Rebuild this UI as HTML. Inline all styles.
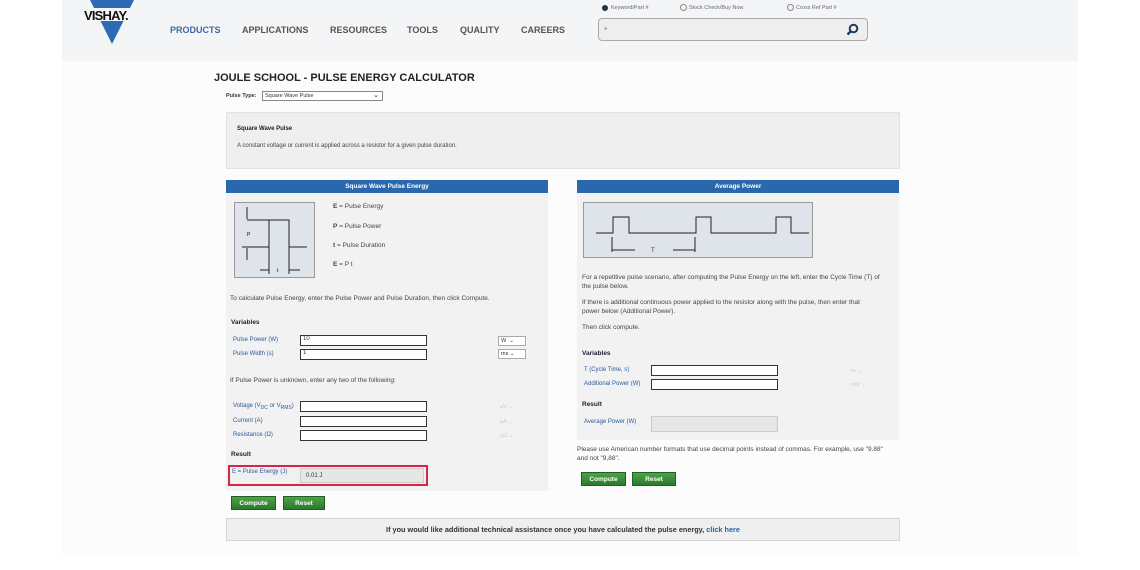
<!DOCTYPE html>
<html><head><meta charset="utf-8"><style>
*{margin:0;padding:0;box-sizing:border-box}
body{width:1140px;height:570px;background:#fff;position:relative;overflow:hidden;font-family:"Liberation Sans",Arial,sans-serif;color:#333}
.a{position:absolute;white-space:nowrap}
.nav{font-size:9px;font-weight:bold;color:#555;top:25px}
.s{font-size:6.5px;color:#444}
.lb{font-size:6px;color:#2a5a9a}
.in{position:absolute;background:#fff;border:1px solid #333;height:11px}
.btn{position:absolute;background:linear-gradient(#4ea24a,#2c7a2c);color:#fff;font-size:6.5px;font-weight:bold;text-align:center;line-height:13px;height:14px;border:1px solid #1f5f1f}
.hd{position:absolute;background:#2a68ae;color:#fff;font-size:6.5px;font-weight:bold;text-align:center;line-height:13px;height:13px}
.sel{position:absolute;font-size:5.5px;color:#ccc}
</style></head><body>
<div class="a" style="left:62px;top:0;width:1016px;height:61px;background:#f4f5f7"></div>
<div class="a" style="left:62px;top:61px;width:1016px;height:496px;background:#fcfcfc"></div>
<svg class="a" style="left:82px;top:0" width="60" height="46"><polygon points="8,0 52,0 30,44" fill="#2d6bb3"/><rect x="0" y="8" width="60" height="13" fill="#f4f5f7"/></svg>
<div class="a" style="left:84px;top:8px;font-size:13px;font-weight:900;color:#111;letter-spacing:-0.8px">VISHAY.</div>
<div class="a nav" style="left:170px;color:#3c6aa0">PRODUCTS</div>
<div class="a nav" style="left:242px">APPLICATIONS</div>
<div class="a nav" style="left:330px">RESOURCES</div>
<div class="a nav" style="left:407px">TOOLS</div>
<div class="a nav" style="left:460px">QUALITY</div>
<div class="a nav" style="left:521px">CAREERS</div>
<div class="a" style="left:602px;top:5px;width:6px;height:6px;border-radius:50%;background:#234"></div>
<div class="a" style="left:611px;top:5px;font-size:5.5px;color:#667">Keyword/Part #</div>
<div class="a" style="left:680px;top:4px;width:7px;height:7px;border-radius:50%;border:1px solid #888"></div>
<div class="a" style="left:689px;top:5px;font-size:5.5px;color:#667">Stock Check/Buy Now</div>
<div class="a" style="left:787px;top:4px;width:7px;height:7px;border-radius:50%;border:1px solid #888"></div>
<div class="a" style="left:796px;top:5px;font-size:5.5px;color:#667">Cross Ref Part #</div>
<div class="a" style="left:598px;top:18px;width:270px;height:23px;border:1px solid #aaa;border-radius:4px;background:#eceef0"></div>
<div class="a" style="left:604px;top:26px;font-size:5.5px">»</div>
<svg class="a" style="left:846px;top:23px" width="13" height="13"><circle cx="7.5" cy="5.5" r="3.8" stroke="#1f3a5a" stroke-width="2" fill="none"/><line x1="4.8" y1="8.2" x2="1.5" y2="11.5" stroke="#1f3a5a" stroke-width="2.4"/></svg>
<div class="a" style="left:214px;top:72px;font-size:11px;font-weight:bold;color:#222">JOULE SCHOOL - PULSE ENERGY CALCULATOR</div>
<div class="a" style="left:226px;top:93px;font-size:5.5px;font-weight:bold">Pulse Type:</div>
<div class="a" style="left:262px;top:91px;width:121px;height:10px;border:1px solid #888;background:#fff;font-size:5.5px;padding:1px 2px">Square Wave Pulse<span style="position:absolute;right:3px;top:-1px;font-size:7px">⌄</span></div>
<div class="a" style="left:226px;top:112px;width:674px;height:57px;background:#efefef;border:1px solid #e2e2e2"></div>
<div class="a" style="left:237px;top:126px;font-size:6px;font-weight:bold;color:#222">Square Wave Pulse</div>
<div class="a s" style="left:237px;top:143px;font-size:6px">A constant voltage or current is applied across a resistor for a given pulse duration.</div>
<!-- left panel -->
<div class="a" style="left:226px;top:180px;width:322px;height:311px;background:#f2f2f2"></div>
<div class="hd" style="left:226px;top:180px;width:322px">Square Wave Pulse Energy</div>
<svg class="a" style="left:234px;top:202px" width="81" height="76"><rect x="0.5" y="0.5" width="80" height="75" fill="#dfe3ea" stroke="#999"/><g stroke="#222" stroke-width="1" fill="none"><polyline points="8,45 35,45 35,18 55,18 55,45 73,45"/><line x1="13" y1="5" x2="13" y2="17"/><line x1="13" y1="18" x2="35" y2="18"/><line x1="13" y1="46" x2="13" y2="58"/><line x1="35" y1="45" x2="35" y2="72"/><line x1="55" y1="45" x2="55" y2="72"/><line x1="26" y1="68" x2="35" y2="68"/><line x1="55" y1="68" x2="66" y2="68"/></g><text x="13" y="34" font-size="5" font-family="Liberation Sans">P</text><text x="43" y="70" font-size="5" font-family="Liberation Sans">t</text></svg>
<div class="a s" style="left:333px;top:203px"><b>E</b> = Pulse Energy</div>
<div class="a s" style="left:333px;top:223px"><b>P</b> = Pulse Power</div>
<div class="a s" style="left:333px;top:242px"><b>t</b> = Pulse Duration</div>
<div class="a s" style="left:333px;top:261px"><b>E</b> = P t</div>
<div class="a s" style="left:230px;top:295px">To calculate Pulse Energy, enter the Pulse Power and Pulse Duration, then click Compute.</div>
<div class="a" style="left:231px;top:319px;font-size:6.5px;font-weight:bold;color:#223">Variables</div>
<div class="a lb" style="left:233px;top:337px">Pulse Power (W)</div>
<div class="in" style="left:300px;top:335px;width:127px;font-size:6px;padding-left:2px">10</div>
<div class="a lb" style="left:233px;top:351px">Pulse Width (s)</div>
<div class="in" style="left:300px;top:349px;width:127px;font-size:6px;padding-left:2px">1</div>
<div class="a" style="left:498px;top:336px;width:28px;height:10px;border:1px solid #aaa;background:#fff;font-size:5.5px;padding:1px 2px">W &nbsp;⌄</div>
<div class="a" style="left:498px;top:349px;width:28px;height:10px;border:1px solid #aaa;background:#fff;font-size:5.5px;padding:1px 2px">ms ⌄</div>
<div class="a s" style="left:230px;top:377px">If Pulse Power is unknown, enter any two of the following:</div>
<div class="a lb" style="left:233px;top:403px">Voltage (V<sub>DC</sub> or V<sub>RMS</sub>)</div>
<div class="in" style="left:300px;top:401px;width:127px"></div>
<div class="a lb" style="left:233px;top:418px">Current (A)</div>
<div class="in" style="left:300px;top:416px;width:127px"></div>
<div class="a lb" style="left:233px;top:432px">Resistance (Ω)</div>
<div class="in" style="left:300px;top:430px;width:127px"></div>
<div class="sel" style="left:500px;top:404px">µV ⌄</div>
<div class="sel" style="left:500px;top:419px">µA ⌄</div>
<div class="sel" style="left:500px;top:433px">µΩ ⌄</div>
<div class="a" style="left:231px;top:451px;font-size:6.5px;font-weight:bold;color:#223">Result</div>
<div class="a" style="left:228px;top:465px;width:200px;height:21px;border:2px solid #d8234a;background:#f0f0f0"></div>
<div class="a lb" style="left:232px;top:469px">E = Pulse Energy (J)</div>
<div class="a" style="left:300px;top:468px;width:124px;height:15px;background:#e6e6e6;border:1px solid #ccc;font-size:6px;padding:4px 5px">0.01 J</div>
<div class="btn" style="left:231px;top:496px;width:45px">Compute</div>
<div class="btn" style="left:283px;top:496px;width:42px">Reset</div>
<!-- right panel -->
<div class="a" style="left:577px;top:180px;width:322px;height:260px;background:#f2f2f2"></div>
<div class="hd" style="left:577px;top:180px;width:322px">Average Power</div>
<svg class="a" style="left:583px;top:202px" width="230" height="56"><rect x="0.5" y="0.5" width="229" height="55" fill="#dfe3ea" stroke="#999"/><polyline points="13,31 30,31 30,15 46,15 46,31 113,31 113,15 128,15 128,31 193,31 193,15 208,15 208,31 226,31" stroke="#222" fill="none"/><g stroke="#222"><line x1="29" y1="48" x2="52" y2="48"/><line x1="90" y1="48" x2="112" y2="48"/><line x1="29" y1="35" x2="29" y2="50"/><line x1="112" y1="35" x2="112" y2="50"/></g><text x="68" y="50" font-size="6" font-family="Liberation Sans" fill="#333">T</text></svg>
<div class="a s" style="left:582px;top:274px">For a repetitive pulse scenario, after computing the Pulse Energy on the left, enter the Cycle Time (T) of</div>
<div class="a s" style="left:582px;top:283px">the pulse below.</div>
<div class="a s" style="left:582px;top:299px">If there is additional continuous power applied to the resistor along with the pulse, then enter that</div>
<div class="a s" style="left:582px;top:308px">power below (Additional Power).</div>
<div class="a s" style="left:582px;top:324px">Then click compute.</div>
<div class="a" style="left:582px;top:350px;font-size:6.5px;font-weight:bold;color:#223">Variables</div>
<div class="a lb" style="left:584px;top:367px">T (Cycle Time, s)</div>
<div class="in" style="left:651px;top:365px;width:127px"></div>
<div class="a lb" style="left:584px;top:381px">Additional Power (W)</div>
<div class="in" style="left:651px;top:379px;width:127px"></div>
<div class="sel" style="left:850px;top:368px">ns ⌄</div>
<div class="sel" style="left:850px;top:382px">mW ⌄</div>
<div class="a" style="left:582px;top:401px;font-size:6.5px;font-weight:bold;color:#223">Result</div>
<div class="a lb" style="left:584px;top:419px">Average Power (W)</div>
<div class="a" style="left:651px;top:416px;width:127px;height:16px;background:#e6e6e6;border:1px solid #ccc"></div>
<div class="a s" style="left:577px;top:446px">Please use American number formats that use decimal points instead of commas. For example, use "9.88"</div>
<div class="a s" style="left:577px;top:455px">and not "9,88".</div>
<div class="btn" style="left:581px;top:472px;width:45px">Compute</div>
<div class="btn" style="left:632px;top:472px;width:44px">Reset</div>
<div class="a" style="left:226px;top:518px;width:674px;height:23px;background:#efefef;border:1px solid #d5d5d5;font-size:7.3px;font-weight:bold;color:#333;text-align:center;line-height:21px">If you would like additional technical assistance once you have calculated the pulse energy, <span style="color:#2a5fa8">click here</span></div>
</body></html>
